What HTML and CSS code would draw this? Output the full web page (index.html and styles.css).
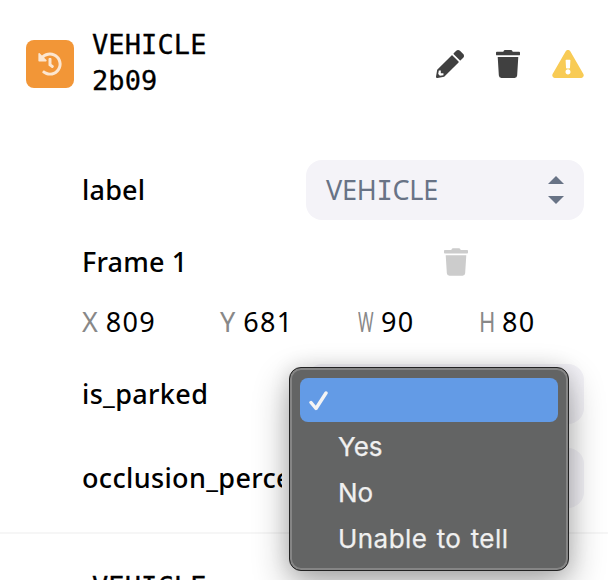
FILE: index.html
```html
<!DOCTYPE html>
<html lang="en">
<head>
<meta charset="utf-8">
<title>Annotations</title>
<link rel="stylesheet" href="styles.css">
</head>
<body>
<svg width="0" height="0" class="defs" aria-hidden="true">
  <symbol id="trash" viewBox="0 0 448 512"><path d="M432 32H312l-9.4-18.7A24 24 0 0 0 281.1 0H166.8a23.72 23.72 0 0 0-21.4 13.3L136 32H16A16 16 0 0 0 0 48v32a16 16 0 0 0 16 16h416a16 16 0 0 0 16-16V48a16 16 0 0 0-16-16zM32 128l21.2 339a48 48 0 0 0 47.9 45h245.8a48 48 0 0 0 47.9-45L416 128z"/></symbol>
</svg>
<article class="card">
  <header class="head">
    <div class="badge">
      <svg width="24" height="24" viewBox="0 0 512 512"><path d="M504 255.531c.253 136.64-111.18 248.372-247.82 248.468-59.015.042-113.223-20.53-155.822-54.911-11.077-8.94-11.905-25.541-1.839-35.607l11.267-11.267c8.609-8.609 22.353-9.551 31.891-1.984C173.062 425.135 212.781 440 256 440c101.705 0 184-82.311 184-184 0-101.705-82.311-184-184-184-48.814 0-93.149 18.969-126.068 49.932l50.754 50.754c10.08 10.08 2.941 27.314-11.313 27.314H24c-8.837 0-16-7.163-16-16V38.627c0-14.254 17.234-21.393 27.314-11.314l49.372 49.372C129.209 34.136 189.552 8 256 8c136.81 0 247.747 110.78 248 247.531zm-180.912 78.784l9.823-12.63c8.138-10.463 6.253-25.542-4.21-33.679L288 256.349V152c0-13.255-10.745-24-24-24h-16c-13.255 0-24 10.745-24 24v135.651l65.409 50.874c10.463 8.137 25.541 6.253 33.679-4.21z"/></svg>
    </div>
    <h2 class="title">VEHICLE<br>2b09</h2>
    <div class="actions">
      <svg width="28" height="28" viewBox="0 0 512 512"><path fill-rule="evenodd" d="M497.9 142.1l-46.1 46.1c-4.7 4.7-12.3 4.7-17 0l-111-111c-4.7-4.7-4.7-12.3 0-17l46.1-46.1c18.7-18.7 49.1-18.7 67.9 0l60.1 60.1c18.8 18.7 18.8 49.1 0 67.9zM284.2 99.8L21.6 362.4.4 483.9c-2.9 16.4 11.4 30.6 27.8 27.8l121.5-21.3 262.6-262.6c4.7-4.7 4.7-12.3 0-17l-111-111c-4.8-4.7-12.4-4.7-17.1 0zM88 424h48v36.3l-64.5 11.3-31.1-31.1L51.7 376H88v48z"/></svg>
      <svg width="24" height="28" viewBox="0 0 448 512" preserveAspectRatio="none"><use href="#trash"/></svg>
      <svg class="warn" width="32" height="28" viewBox="0 0 576 512"><path d="M569.517 440.013C587.975 472.007 564.806 512 527.94 512H48.054c-36.937 0-59.999-40.055-41.577-71.987L246.423 23.985c18.467-32.009 64.72-31.951 83.154 0l239.94 416.028zM288 354c-25.405 0-46 20.595-46 46s20.595 46 46 46 46-20.595 46-46-20.595-46-46-46zm-43.673-165.346l7.418 136c.347 6.364 5.609 11.346 11.982 11.346h48.546c6.373 0 11.635-4.982 11.982-11.346l7.418-136c.375-6.874-5.098-12.654-11.982-12.654h-63.383c-6.884 0-12.356 5.78-11.981 12.654z"/></svg>
    </div>
  </header>
  <div class="body">
    <div class="field">
      <span class="name">label</span>
      <div class="select"><span class="value">VEH<span class="slab">I</span>CLE</span>
        <svg width="16" height="28" viewBox="0 0 16 28"><path d="M0 8L8 0l8 8zM0 20h16l-8 8z"/></svg>
      </div>
    </div>
    <div class="frame">
      <span class="name">Frame 1</span>
      <svg width="24" height="28"><use href="#trash"/></svg>
    </div>
    <div class="coords">
      <span><i>X</i><b>809</b></span>
      <span><i>Y</i><b>681</b></span>
      <span><i class="narrow">W</i><b>90</b></span>
      <span><i class="narrow-h">H</i><b>80</b></span>
    </div>
    <div class="field anchor">
      <span class="name wide">is_parked</span>
      <div class="select"></div>
      <ul class="menu">
        <li class="active"><svg width="20" height="20" viewBox="0 0 20 20"><path d="M2 11.5l5 6L17 2"/></svg></li>
        <li>Yes</li>
        <li>No</li>
        <li class="long">Unable to tell</li>
      </ul>
    </div>
    <div class="field">
      <span class="name wide">occlusion_percentage</span>
      <div class="select"></div>
    </div>
  </div>
</article>
<article class="card next">
  <h2 class="title">VEHICLE</h2>
</article>
</body>
</html>
```

FILE: styles.css
```css
* { box-sizing: border-box; }
body {
  margin: 0;
  height: 580px;
  overflow: hidden;
  background: #fff;
  color: #000;
  font-family: "Noto Sans", sans-serif;
  font-size: 27px;
}
svg { display: block; flex: none; }
.defs { position: absolute; }
.card { height: 534px; padding: 26px 24px 0 26px; border-bottom: 2px solid #f6f6f6; }
.head { display: flex; height: 134px; }
.badge {
  display: flex;
  align-items: center;
  justify-content: center;
  width: 48px;
  height: 48px;
  margin: 14px 18px 0 0;
  border-radius: 8px;
  background: #f29637;
  fill: #fce6d0;
}
.title {
  margin: 0;
  padding-top: 1px;
  font: 400 27px/36px "DejaVu Sans Mono", monospace;
  letter-spacing: .1px;
  -webkit-text-stroke: .3px #000;
}
.actions { display: flex; gap: 32px; margin: 24px 0 0 auto; fill: #404040; }
.warn { fill: #f8cb55; }
.body { padding-left: 56px; }
.field { display: flex; align-items: center; gap: 24px; height: 60px; }
.name { width: 200px; overflow: hidden; white-space: nowrap; font-weight: 500; line-height: 44px; letter-spacing: .2px; }
.wide { letter-spacing: .35px; }
.select {
  display: flex;
  align-items: center;
  justify-content: space-between;
  width: 278px;
  height: 60px;
  padding: 0 20px;
  border-radius: 16px;
  background: #f4f3f8;
  color: #687386;
  fill: #687386;
}
.value { letter-spacing: -.25px; margin-top: -2px; }
.slab { font-family: "DejaVu Sans Mono", monospace; }
.frame { display: flex; align-items: center; height: 84px; fill: #ccc; }
.frame svg { margin-left: 162px; }
.coords { display: grid; grid-template-columns: 138px 138px 121px 1fr; height: 36px; line-height: 36px; }
.coords span { display: flex; gap: 8px; }
.coords i { font-style: normal; color: #888; }
.coords b { font-weight: 400; letter-spacing: 1.3px; }
.coords .narrow { width: 15px; transform: scaleX(.62); transform-origin: 0 50%; }
.coords .narrow-h { width: 15px; transform: scaleX(.82); transform-origin: 0 50%; }
.anchor { position: relative; margin: 24px 0; }
.menu {
  position: absolute;
  left: 207px;
  top: 3px;
  width: 280px;
  height: 204px;
  margin: 0;
  padding: 9px 10px;
  list-style: none;
  border: 1px solid #222;
  border-radius: 12px;
  background: #636464;
  box-shadow: inset 0 0 0 2px #858585, 0 14px 36px rgba(0,0,0,.32), 0 0 20px rgba(0,0,0,.12);
  color: #f0f0f0;
  font: 400 26px/46px Inter, sans-serif;
  -webkit-text-stroke: .25px #f0f0f0;
}
.menu li { height: 46px; padding: 2px 0 0 38px; }
.menu .active { height: 44px; margin: 1px 0 0; padding: 13px 0 0 9px; border-radius: 8px; background: #639be6; }
.active path { fill: none; stroke: #f4f4f4; stroke-width: 3.4; stroke-linecap: round; stroke-linejoin: round; }
.menu .long { letter-spacing: .45px; word-spacing: 1.5px; }
.next { height: 46px; overflow: hidden; padding: 34px 0 0 92px; border: 0; }
```
